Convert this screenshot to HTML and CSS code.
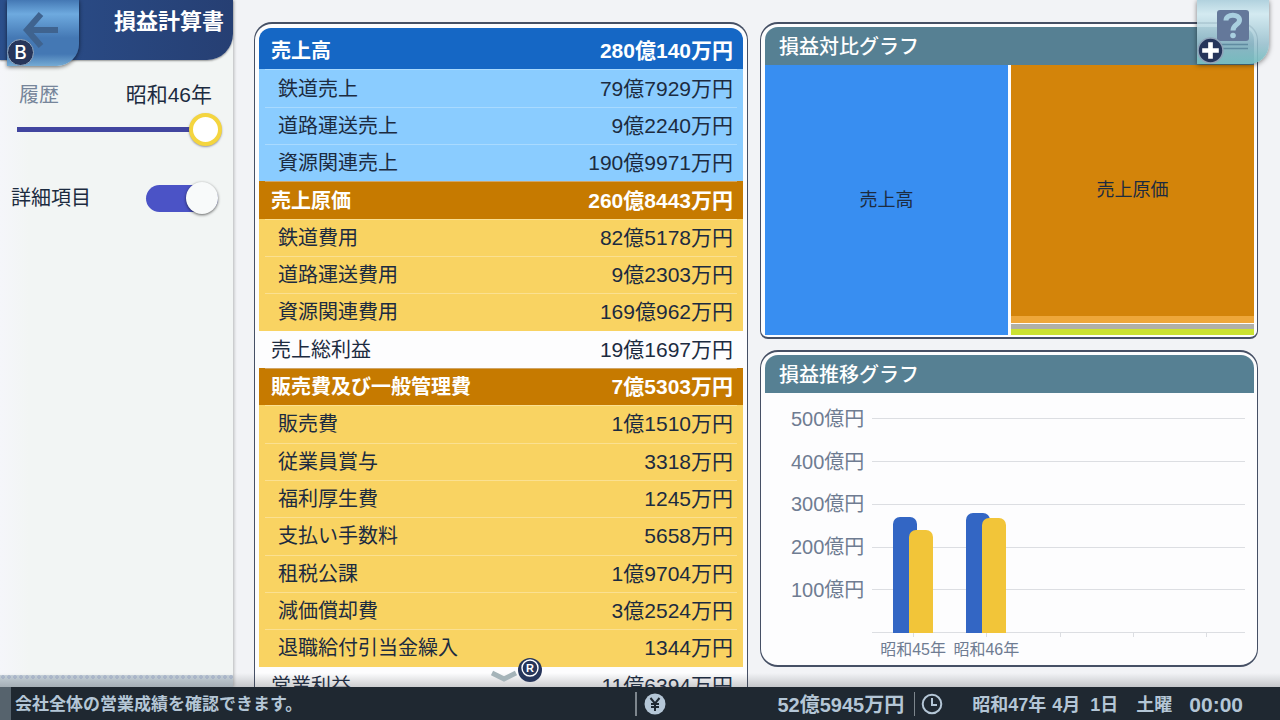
FILE: index.html
```html
<!DOCTYPE html>
<html lang="ja">
<head>
<meta charset="utf-8">
<title>損益計算書</title>
<link rel="stylesheet" href="styles.css">
</head>
<body>
<main class="screen">
  <aside class="sidebar">
    <header class="title-bar">
      <h1 class="title">損益計算書</h1>
      <button class="back" type="button" aria-label="戻る">
        <svg class="back-arrow" viewBox="0 0 38 38" aria-hidden="true"><path d="M19 3 L5 19 L19 35 M5 19 H36" fill="none" stroke="#3f638f" stroke-width="6"/></svg>
        <span class="key key-b">B</span>
      </button>
    </header>
    <div class="controls">
      <div class="history">
        <label class="history-label" for="history">履歴</label>
        <output class="history-value" for="history">昭和46年</output>
      </div>
      <input class="slider" id="history" type="range" min="45" max="46" value="46">
      <div class="detail">
        <label for="detail">詳細項目</label>
        <input class="toggle" id="detail" type="checkbox" checked>
      </div>
    </div>
    <div class="sidebar-foot"></div>
  </aside>

  <div class="content">
    <section class="panel statement">
      <table class="accounts">
        <tbody>
          <tr class="total sales first"><th scope="row">売上高</th><td>280億140万円</td></tr>
          <tr class="sub blue"><th scope="row">鉄道売上</th><td>79億7929万円</td></tr>
          <tr class="sub blue"><th scope="row">道路運送売上</th><td>9億2240万円</td></tr>
          <tr class="sub blue"><th scope="row">資源関連売上</th><td>190億9971万円</td></tr>
          <tr class="total cost"><th scope="row">売上原価</th><td>260億8443万円</td></tr>
          <tr class="sub yellow"><th scope="row">鉄道費用</th><td>82億5178万円</td></tr>
          <tr class="sub yellow"><th scope="row">道路運送費用</th><td>9億2303万円</td></tr>
          <tr class="sub yellow"><th scope="row">資源関連費用</th><td>169億962万円</td></tr>
          <tr class="profit"><th scope="row">売上総利益</th><td>19億1697万円</td></tr>
          <tr class="total cost"><th scope="row">販売費及び一般管理費</th><td>7億5303万円</td></tr>
          <tr class="sub yellow"><th scope="row">販売費</th><td>1億1510万円</td></tr>
          <tr class="sub yellow"><th scope="row">従業員賞与</th><td>3318万円</td></tr>
          <tr class="sub yellow"><th scope="row">福利厚生費</th><td>1245万円</td></tr>
          <tr class="sub yellow"><th scope="row">支払い手数料</th><td>5658万円</td></tr>
          <tr class="sub yellow"><th scope="row">租税公課</th><td>1億9704万円</td></tr>
          <tr class="sub yellow"><th scope="row">減価償却費</th><td>3億2524万円</td></tr>
          <tr class="sub yellow"><th scope="row">退職給付引当金繰入</th><td>1344万円</td></tr>
          <tr class="profit"><th scope="row">営業利益</th><td>11億6394万円</td></tr>
        </tbody>
      </table>
    </section>

    <div class="graphs">
      <section class="panel graph compare">
        <h2 class="graph-title">損益対比グラフ</h2>
        <div class="treemap">
          <div class="tile tile-sales">売上高</div>
          <div class="costs">
            <div class="tile tile-cost">売上原価</div>
            <div class="tile-admin"></div>
            <div class="tile-other"></div>
            <div class="tile-profit"></div>
          </div>
        </div>
      </section>

      <section class="panel graph trend">
        <h2 class="graph-title">損益推移グラフ</h2>
        <div class="chart">
          <div class="scale">
            <span>500億円</span><span>400億円</span><span>300億円</span><span>200億円</span><span>100億円</span><span></span>
          </div>
          <div class="plot">
            <i class="line"></i><i class="line"></i><i class="line"></i><i class="line"></i><i class="line"></i><i class="line"></i>
            <div class="years">
              <div class="year"><i class="bar income" style="height:54%"></i><i class="bar expense" style="height:48%"></i><span class="year-name">昭和45年</span></div>
              <div class="year"><i class="bar income" style="height:56%"></i><i class="bar expense" style="height:53.5%"></i><span class="year-name">昭和46年</span></div>
              <div class="year"></div>
              <div class="year"></div>
              <div class="year"></div>
            </div>
          </div>
        </div>
      </section>
    </div>
  </div>

  <button class="scroll" type="button" aria-label="下へスクロール">
    <svg class="chevron" viewBox="0 0 26 12" aria-hidden="true"><path d="M1 3 L13 9 L25 3" fill="none" stroke="#a5b4b9" stroke-width="5"/></svg>
    <svg class="key-r" viewBox="0 0 24 24" aria-hidden="true"><circle cx="12" cy="12" r="12" fill="#26355a"/><circle cx="12" cy="10" r="8" fill="none" stroke="#fff" stroke-width="1.4"/><text class="key-r-text" x="12" y="14" text-anchor="middle">R</text></svg>
  </button>

  <button class="help" type="button" aria-label="ヘルプ">
    <svg class="book" viewBox="0 0 32 40" aria-hidden="true"><rect width="32" height="31" rx="3" fill="#64789a"/><path d="M2 34.5 H31 M2 38.5 H31" stroke="#5f8ba0" stroke-width="1.4"/><path d="M9 10.500 C9 3.500 22.500 3.500 22.500 10 C22.500 15 16 14 16 20.500" fill="none" stroke="#a9cfdf" stroke-width="5"/><circle cx="16" cy="25.500" r="2.800" fill="#a9cfdf"/></svg>
    <svg class="key-plus" viewBox="0 0 26 26" aria-hidden="true"><circle cx="13" cy="13" r="12" fill="#26355a" stroke="#8fa3b8" stroke-width="1.500"/><path d="M13 5 V21 M5 13 H21" stroke="#fff" stroke-width="4.500"/></svg>
  </button>
</main>

<footer class="status">
  <p class="message">会社全体の営業成績を確認できます。</p>
  <div class="money">
    <svg class="status-icon" viewBox="0 0 22 22" aria-hidden="true"><circle cx="11" cy="11" r="10.500" fill="#b4c6d6"/><path d="M6.500 5 L11 10.500 L15.500 5 M11 10 V18 M7 11 H15 M7 14 H15" fill="none" stroke="#1f2831" stroke-width="2"/></svg>
    <span class="amount">52億5945万円</span>
  </div>
  <div class="clock">
    <svg class="status-icon" viewBox="0 0 22 22" aria-hidden="true"><circle cx="11" cy="11" r="9.300" fill="none" stroke="#b4c6d6" stroke-width="2"/><path d="M11 5 V12 H16" fill="none" stroke="#b4c6d6" stroke-width="2"/></svg>
    <span class="date"><span>昭和47年</span><span>4月</span><span class="day">1日</span></span>
    <span class="weekday">土曜</span>
    <time class="time">00:00</time>
  </div>
</footer>
</body>
</html>
```

FILE: styles.css
```css
* { box-sizing: border-box; }

body {
  margin: 0;
  height: 100vh;
  display: flex;
  flex-direction: column;
  overflow: hidden;
  background: #f2f3f6;
  color: #1c2b40;
  font: 20px/30px "Liberation Sans", "Noto Sans CJK JP", sans-serif;
}

h1, h2, p { margin: 0; }

button {
  border: 0;
  padding: 0;
  font: inherit;
  cursor: pointer;
}

.screen {
  flex: 1;
  min-height: 0;
  position: relative;
  display: flex;
  overflow: hidden;
}

.screen::after {
  content: "";
  position: absolute;
  inset: auto 0 0;
  height: 14px;
  background: linear-gradient(transparent, rgba(60, 65, 70, .25));
  pointer-events: none;
}

/* sidebar */
.sidebar {
  flex: none;
  width: 233px;
  display: flex;
  flex-direction: column;
  background: linear-gradient(90deg, #f5f6fa, #f2f5f4 30px);
  box-shadow: 1px 0 3px rgba(0, 0, 0, .25);
}

.title-bar {
  position: relative;
  height: 60px;
  padding: 7px 9px 0 0;
  border-radius: 0 0 26px 0;
  background: linear-gradient(90deg, #2b4f8c, #263f73);
  box-shadow: 0 1px 2px rgba(0, 0, 0, .4);
  text-align: right;
}

.title {
  color: #fff;
  font-size: 22px;
  font-weight: 700;
  line-height: 30px;
}

.back {
  position: absolute;
  left: 7px;
  top: 0;
  width: 72px;
  height: 66px;
  border-radius: 0 0 22px 0;
  background: linear-gradient(#4478b4, #6eaadf 14px, #4478b4 38px, #4478b4 54px, #75abd4);
  box-shadow: 0 1px 4px rgba(0, 0, 0, .6);
}

.back-arrow {
  position: absolute;
  left: 15px;
  top: 11px;
  width: 38px;
  height: 38px;
}

.key-b {
  position: absolute;
  left: 0;
  top: 39px;
  width: 27px;
  height: 27px;
  border: 1px solid #93a8bf;
  border-radius: 50%;
  background: #26355a;
  color: #fff;
  font-family: Inter, sans-serif;
  font-size: 19px;
  font-weight: 500;
  line-height: 26px;
  text-align: center;
}

.controls {
  flex: 1;
  padding: 20px 11px 0 11px;
}

.history {
  display: flex;
  justify-content: space-between;
  padding: 0 10px 0 8px;
}

.history-label { color: #76859a; }
.history-value { font-size: 21px; }

.slider {
  appearance: none;
  display: block;
  width: 205px;
  height: 33px;
  margin: 3px 0 0 6px;
  background: linear-gradient(#41459f, #41459f) left center / 188px 5px no-repeat;
}

.slider::-webkit-slider-thumb {
  appearance: none;
  width: 33px;
  height: 33px;
  border: 4px solid #f4d53f;
  border-radius: 50%;
  background: #fff;
  box-shadow: 0 1px 2px rgba(60, 60, 90, .5);
}

.detail {
  display: flex;
  align-items: center;
  justify-content: space-between;
  padding-right: 4px;
  margin-top: 37px;
}

.toggle {
  appearance: none;
  display: flex;
  align-items: center;
  justify-content: flex-end;
  width: 72px;
  height: 27px;
  margin: 0;
  border-radius: 14px;
  background: #4b53c6;
}

.toggle::before {
  content: "";
  flex: none;
  width: 32px;
  height: 32px;
  border-radius: 50%;
  background: #f8fafa;
  box-shadow: 0 1px 3px rgba(0, 0, 0, .6);
}

.sidebar-foot {
  height: 12px;
  background:
    radial-gradient(circle, #b3bfd2 2px, transparent 2px) 0 0 / 6px 4px repeat-x,
    #c9d4dc;
}

/* content area */
.content {
  flex: 1;
  display: grid;
  grid-template-columns: 494fr 498fr;
  gap: 12px;
  padding: 22px 22px 0 21px;
  min-width: 0;
}

.panel {
  border: 2px solid #465065;
  border-width: 2px 1px;
  border-radius: 18px;
  background: #fdfdfe;
  overflow: hidden;
}

.statement {
  min-height: 0;
  padding: 4px 4px 0;
  border-bottom: 0;
  border-radius: 18px 18px 0 0;
}

.accounts {
  width: 100%;
  height: 676px;
  border-spacing: 0;
}

.accounts th,
.accounts td {
  height: 37px;
  padding: 1px 10px 0 12px;
  font-weight: 400;
  text-align: right;
  white-space: nowrap;
}

.accounts th { text-align: left; }
.accounts td { font-size: 21px; }

.accounts .first th,
.accounts .first td {
  height: 41px;
  padding-top: 5px;
}

.accounts .first th { border-top-left-radius: 12px; }
.accounts .first td { border-top-right-radius: 12px; }

.accounts .total th,
.accounts .total td {
  color: #fff;
  font-weight: 700;
}

.sales th, .sales td { background: #1567c5; }
.accounts .sub th { padding-left: 19px; }
.blue { --row: #8accff; --rule: #a9daff; }
.yellow { --row: #f9d362; --rule: #fbe091; }
.cost { --row: #c67a00; --rule: #d0a566; }

.sub th, .cost th { background: linear-gradient(var(--rule), var(--rule)) 6px 0 / 100% 1px no-repeat var(--row); }
.sub td, .cost td { background: linear-gradient(var(--rule), var(--rule)) -6px 0 / 100% 1px no-repeat var(--row); }

/* graphs */
.graphs {
  display: flex;
  flex-direction: column;
  gap: 11px;
  padding-bottom: 20px;
  min-height: 0;
}

.graph {
  flex: 1;
  min-height: 0;
  display: flex;
  flex-direction: column;
  padding: 3px 3px 3px 4px;
}

.compare {
  padding-bottom: 2px;
  border-radius: 18px 18px 8px 8px;
}

.graph-title {
  flex: none;
  height: 38px;
  padding-left: 14px;
  border-radius: 13px 13px 0 0;
  background: #568093;
  color: #fff;
  font-size: 20px;
  font-weight: 500;
  line-height: 40px;
}

.treemap {
  flex: 1;
  display: grid;
  grid-template-columns: 1fr 1fr;
  gap: 3px;
  font-size: 18px;
}

.costs {
  display: flex;
  flex-direction: column;
}

.tile {
  display: flex;
  align-items: center;
  justify-content: center;
}

.tile-sales { background: #388ef1; }
.tile-cost { flex: 1; background: #d3840a; }
.tile-admin { height: 7px; margin-bottom: 1px; background: #eea73a; }
.tile-other { height: 5px; background: #b0b0a8; }
.tile-profit { height: 6px; background: #cbe233; }

.chart {
  flex: 1;
  display: flex;
  gap: 8px;
  padding: 5px 9px 8px 26px;
  color: #6f7c92;
}

.scale,
.plot {
  display: grid;
  grid-template-rows: repeat(6, 1fr);
  align-items: center;
}

.scale { text-align: right; }

.plot {
  flex: 1;
  position: relative;
}

.line {
  height: 1px;
  background: #dcdee2;
}

.years {
  position: absolute;
  inset: calc(100% / 12) 2px calc(100% / 12) 4px;
  display: grid;
  grid-template-columns: repeat(5, 1fr);
}

.year {
  position: relative;
  display: flex;
  align-items: flex-end;
  justify-content: center;
}

.year::after {
  content: "";
  position: absolute;
  top: 100%;
  left: 50%;
  width: 1px;
  height: 4px;
  background: #dcdee2;
}

.bar {
  width: 24px;
  border-radius: 7px 7px 0 0;
}

.income { background: #3366c4; }
.expense { margin-left: -8px; background: #f2c539; }

.year-name {
  position: absolute;
  top: 100%;
  left: 0;
  right: 0;
  padding-top: 2px;
  font-size: 16px;
  text-align: center;
  white-space: nowrap;
}

/* floating buttons */
.help {
  position: absolute;
  top: 0;
  right: 11px;
  width: 72px;
  height: 64px;
  border-radius: 0 0 20px 0;
  background: linear-gradient(rgba(174, 208, 221, .95), rgba(208, 233, 240, .9) 14px, rgba(149, 190, 204, .85) 44px, rgba(119, 190, 192, .95));
  box-shadow: 0 1px 5px rgba(0, 0, 0, .5);
}

.book {
  position: absolute;
  left: 20px;
  top: 10px;
  width: 32px;
  height: 40px;
}

.key-plus {
  position: absolute;
  left: 0;
  top: 37px;
  width: 27px;
  height: 27px;
}

.scroll {
  position: absolute;
  left: 491px;
  bottom: 5px;
  z-index: 1;
  display: flex;
  align-items: center;
  gap: 1px;
  background: none;
}

.chevron {
  width: 26px;
  height: 12px;
  margin-top: 12px;
}

.key-r {
  width: 24px;
  height: 24px;
}

.key-r-text {
  fill: #fff;
  font-size: 11px;
  font-weight: 700;
}

/* status bar */
.status {
  flex: none;
  display: flex;
  align-items: center;
  height: 33px;
  padding-right: 37px;
  border-left: 11px solid #56636d;
  background: #1f2831;
  color: #b4c6d6;
  font-weight: 700;
}

.message {
  flex: 1;
  padding: 3px 0 0 4px;
  font-size: 17px;
}

.money,
.clock {
  display: flex;
  align-items: center;
  height: 24px;
  border-left: 1px solid #7d868d;
}

.money {
  width: 279px;
  justify-content: space-between;
  padding: 0 10px 0 7px;
  border-left-width: 2px;
}

.amount, .date, .weekday, .time { padding-top: 2px; }

.clock { padding-left: 6px; }

.status-icon {
  width: 22px;
  height: 22px;
}

.date {
  display: flex;
  gap: 6px;
  margin-left: 29px;
  font-size: 18px;
}

.day { margin-left: 4px; }

.weekday {
  margin: 0 17px 0 18px;
  font-size: 18px;
}

.time { font-size: 21px; }
```
